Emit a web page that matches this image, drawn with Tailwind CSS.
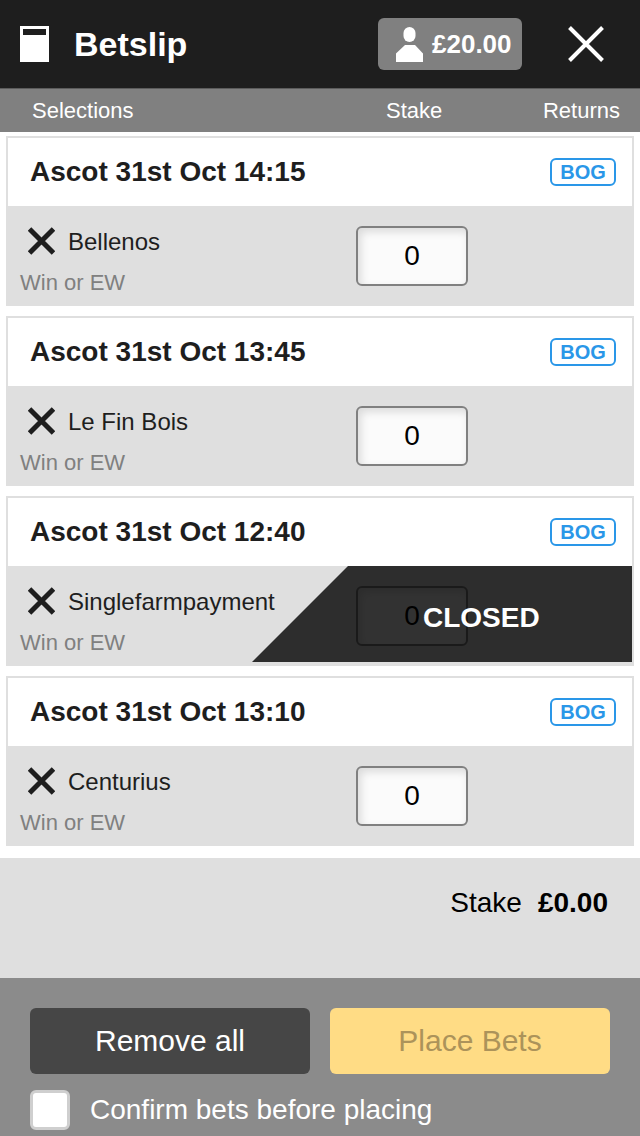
<!DOCTYPE html>
<html lang="en">
<head>
    <meta charset="UTF-8">
    <meta name="viewport" content="width=device-width, initial-scale=1.0">
    <title>Betslip</title>
    <script src="https://cdn.jsdelivr.net/npm/@tailwindcss/browser@4"></script>
</head>
<body class="w-[640px] h-[1136px] overflow-hidden bg-white font-['Liberation_Sans',Arial,sans-serif] text-[#1e1e1e]">
    <!-- Header -->
    <header class="flex items-center h-[88px] pl-5 pr-9 bg-[#1e1e1e] text-white">
        <svg class="w-[29px] h-9" viewBox="0 0 29 36" fill="none">
            <path d="M0 0H29V36H0Z" fill="#fff"/>
            <path d="M3 3H26V9H3Z" fill="#1e1e1e"/>
        </svg>
        <h1 class="ml-[25px] text-[34px] leading-none font-bold">Betslip</h1>
        <div class="ml-auto flex items-center w-36 h-[52px] pl-[18px] rounded-md bg-[#808080]">
            <svg class="w-[27px] h-[35px]" viewBox="0 0 27 35" fill="#fff">
                <rect x="7.5" y="0" width="12" height="15" rx="6"/>
                <path d="M9 18H19L27 26.5V35H0V26.5Z"/>
            </svg>
            <span class="ml-[9px] text-[26px] leading-none font-bold">£20.00</span>
        </div>
        <button type="button" aria-label="Close" class="ml-[46px]">
            <svg class="w-9 h-9" viewBox="0 0 36 36" fill="none" stroke="#fff" stroke-width="4">
                <path d="M1.5 1.5L34.5 34.5M34.5 1.5L1.5 34.5"/>
            </svg>
        </button>
    </header>

    <div class="flex items-center h-11 pl-8 pr-5 border-t border-[#5c5c5c] bg-[#808080] text-white text-[22px] leading-none">
        <span class="w-[354px]">Selections</span>
        <span>Stake</span>
        <span class="ml-auto">Returns</span>
    </div>

    <!-- Selections -->
    <main class="flex flex-col gap-2.5 px-1.5 pt-1 pb-3">
        <section class="h-[170px] border-2 border-[#dfdfdf] bg-[#dfdfdf]">
            <div class="flex items-center justify-between h-[68px] pl-[22px] pr-4 bg-white">
                <h2 class="text-[28px] leading-none font-bold">Ascot 31st Oct 14:15</h2>
                <span class="flex items-center justify-center w-[66px] h-7 border-2 border-[#2a97e8] rounded-md text-[20px] leading-none font-bold text-[#2a97e8]">BOG</span>
            </div>
            <div class="flex h-[98px]">
                <div class="w-[348px] pt-[21px] pl-3">
                    <div class="flex items-center h-7 pl-2">
                        <svg class="w-[27px] h-7" viewBox="0 0 27 28" fill="none" stroke="#1e1e1e" stroke-width="5">
                            <path d="M1.5 2L25.5 26M25.5 2L1.5 26"/>
                        </svg>
                        <span class="ml-[13px] pt-0.5 text-[24px] leading-7">Bellenos</span>
                    </div>
                    <p class="mt-4 text-[22px] leading-6 text-[#808080]">Win or EW</p>
                </div>
                <input type="text" value="0" class="mt-5 w-28 h-[60px] border-2 border-[#808080] rounded-md bg-[#fbfbfb] text-center text-[28px] text-black shadow-[inset_3px_4px_8px_rgba(0,0,0,0.13)]">
            </div>
        </section>

        <section class="h-[170px] border-2 border-[#dfdfdf] bg-[#dfdfdf]">
            <div class="flex items-center justify-between h-[68px] pl-[22px] pr-4 bg-white">
                <h2 class="text-[28px] leading-none font-bold">Ascot 31st Oct 13:45</h2>
                <span class="flex items-center justify-center w-[66px] h-7 border-2 border-[#2a97e8] rounded-md text-[20px] leading-none font-bold text-[#2a97e8]">BOG</span>
            </div>
            <div class="flex h-[98px]">
                <div class="w-[348px] pt-[21px] pl-3">
                    <div class="flex items-center h-7 pl-2">
                        <svg class="w-[27px] h-7" viewBox="0 0 27 28" fill="none" stroke="#1e1e1e" stroke-width="5">
                            <path d="M1.5 2L25.5 26M25.5 2L1.5 26"/>
                        </svg>
                        <span class="ml-[13px] pt-0.5 text-[24px] leading-7">Le Fin Bois</span>
                    </div>
                    <p class="mt-4 text-[22px] leading-6 text-[#808080]">Win or EW</p>
                </div>
                <input type="text" value="0" class="mt-5 w-28 h-[60px] border-2 border-[#808080] rounded-md bg-[#fbfbfb] text-center text-[28px] text-black shadow-[inset_3px_4px_8px_rgba(0,0,0,0.13)]">
            </div>
        </section>

        <section class="h-[170px] border-2 border-[#dfdfdf] bg-[#dfdfdf]">
            <div class="flex items-center justify-between h-[68px] pl-[22px] pr-4 bg-white">
                <h2 class="text-[28px] leading-none font-bold">Ascot 31st Oct 12:40</h2>
                <span class="flex items-center justify-center w-[66px] h-7 border-2 border-[#2a97e8] rounded-md text-[20px] leading-none font-bold text-[#2a97e8]">BOG</span>
            </div>
            <div class="relative flex h-[98px]">
                <div class="w-[348px] pt-[21px] pl-3">
                    <div class="flex items-center h-7 pl-2">
                        <svg class="w-[27px] h-7" viewBox="0 0 27 28" fill="none" stroke="#1e1e1e" stroke-width="5">
                            <path d="M1.5 2L25.5 26M25.5 2L1.5 26"/>
                        </svg>
                        <span class="ml-[13px] pt-0.5 text-[24px] leading-7">Singlefarmpayment</span>
                    </div>
                    <p class="mt-4 text-[22px] leading-6 text-[#808080]">Win or EW</p>
                </div>
                <input type="text" value="0" disabled class="mt-5 w-28 h-[60px] border-2 border-[#808080] rounded-md bg-[#fbfbfb] text-center text-[28px] text-black shadow-[inset_3px_4px_8px_rgba(0,0,0,0.13)]">
                <!-- Closed market overlay -->
                <div class="absolute top-0 right-0 w-[380px] h-24 pl-[171px] pt-[38px] bg-black/80 [clip-path:polygon(96px_0,100%_0,100%_100%,0_100%)]">
                    <span class="block text-[28px] leading-[28px] font-bold text-white">CLOSED</span>
                </div>
            </div>
        </section>

        <section class="h-[170px] border-2 border-[#dfdfdf] bg-[#dfdfdf]">
            <div class="flex items-center justify-between h-[68px] pl-[22px] pr-4 bg-white">
                <h2 class="text-[28px] leading-none font-bold">Ascot 31st Oct 13:10</h2>
                <span class="flex items-center justify-center w-[66px] h-7 border-2 border-[#2a97e8] rounded-md text-[20px] leading-none font-bold text-[#2a97e8]">BOG</span>
            </div>
            <div class="flex h-[98px]">
                <div class="w-[348px] pt-[21px] pl-3">
                    <div class="flex items-center h-7 pl-2">
                        <svg class="w-[27px] h-7" viewBox="0 0 27 28" fill="none" stroke="#1e1e1e" stroke-width="5">
                            <path d="M1.5 2L25.5 26M25.5 2L1.5 26"/>
                        </svg>
                        <span class="ml-[13px] pt-0.5 text-[24px] leading-7">Centurius</span>
                    </div>
                    <p class="mt-4 text-[22px] leading-6 text-[#808080]">Win or EW</p>
                </div>
                <input type="text" value="0" class="mt-5 w-28 h-[60px] border-2 border-[#808080] rounded-md bg-[#fbfbfb] text-center text-[28px] text-black shadow-[inset_3px_4px_8px_rgba(0,0,0,0.13)]">
            </div>
        </section>
    </main>

    <!-- Total -->
    <div class="flex justify-end gap-4 h-[120px] pt-[31px] pr-8 bg-[#dfdfdf] text-[28px] leading-7 text-black">
        <span>Stake</span>
        <span class="font-bold">£0.00</span>
    </div>

    <!-- Actions -->
    <footer class="h-[158px] pt-[30px] px-[30px] bg-[#8b8b8b] text-white">
        <div class="flex gap-5 text-[30px] leading-none">
            <button type="button" class="w-[280px] h-[66px] rounded-md bg-[#464646]">Remove all</button>
            <button type="button" disabled class="w-[280px] h-[66px] rounded-md bg-[#ffdc85] text-[#ac935a]">Place Bets</button>
        </div>
        <label class="flex items-center mt-4 h-10 text-[28px] leading-none">
            <input type="checkbox" class="appearance-none w-10 h-10 border-3 border-[#cfcfcf] rounded-md bg-white">
            <span class="ml-5">Confirm bets before placing</span>
        </label>
    </footer>
</body>
</html>
